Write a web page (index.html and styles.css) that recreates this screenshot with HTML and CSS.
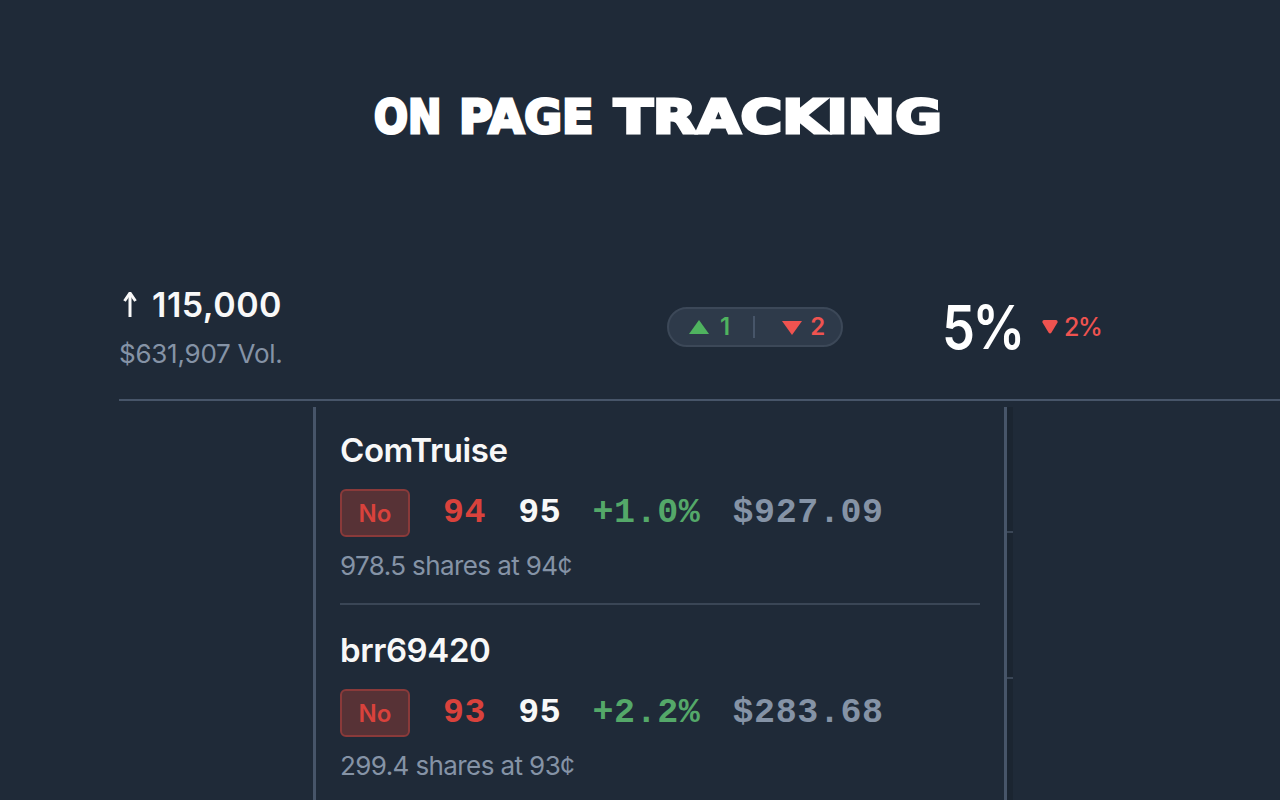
FILE: index.html
```html
<!DOCTYPE html>
<html lang="en">
<head>
  <meta charset="UTF-8" />
  <meta name="viewport" content="width=device-width, initial-scale=1.0" />
  <title>On Page Tracking</title>
  <link rel="stylesheet" href="styles.css">
</head>
<body>
  <header class="title-wrap">
    <h1>
      <span class="word word-on">On</span>
      <span class="word word-page">Page</span>
      <span class="word word-tracking">Tracking</span>
    </h1>
  </header>

  <section class="summary">
    <div class="volume">
      <div class="shares">
        <svg class="shares-arrow" viewBox="0 0 16 25">
          <path d="M8 3 V25" />
          <path d="M2.5 9 L8 1 L13.5 9" />
        </svg>
        115,000
      </div>
      <div class="dollars">$631,907 Vol.</div>
    </div>
    <div class="counts">
      <span class="count up">
        <svg class="tri" viewBox="0 0 20 14"><path d="M10 0 L20 14 L0 14 Z" /></svg>
        1
      </span>
      <span class="count-divider"></span>
      <span class="count down">
        <svg class="tri" viewBox="0 0 20 14"><path d="M0 0 L20 0 L10 14 Z" /></svg>
        2
      </span>
    </div>
    <div class="percent">
      <span class="percent-value">5%</span>
      <span class="percent-change">
        <svg class="tri-small" viewBox="0 0 16 14"><path d="M2 0 H14 Q16 0 15.5 2.5 L9.5 12.5 Q8 14.5 6.5 12.5 L0.5 2.5 Q0 0 2 0 Z" /></svg>
        2%
      </span>
    </div>
  </section>

  <section class="feed">
    <div class="trades">
      <article class="trade">
        <div class="trader">ComTruise</div>
        <div class="trade-row">
          <span class="side">No</span>
          <span class="num entry">94</span>
          <span class="num current">95</span>
          <span class="num gain">+1.0%</span>
          <span class="num value">$927.09</span>
        </div>
        <div class="trade-note">978.5 shares at 94¢</div>
      </article>
      <article class="trade">
        <div class="trader">brr69420</div>
        <div class="trade-row">
          <span class="side">No</span>
          <span class="num entry">93</span>
          <span class="num current">95</span>
          <span class="num gain">+2.2%</span>
          <span class="num value">$283.68</span>
        </div>
        <div class="trade-note">299.4 shares at 93¢</div>
      </article>
    </div>
    <div class="rail">
      <div class="rail-seg first"></div>
      <div class="rail-seg second"></div>
      <div class="rail-seg rest"></div>
    </div>
  </section>
</body>
</html>
```

FILE: styles.css
```css
:root {
  --bg: #1f2a38;
  --line: #475569;
  --muted: #8593a6;
  --white: #f8f8f8;
  --green: #4fb35f;
  --red: #ef5350;
}

* {
  box-sizing: border-box;
  margin: 0;
  padding: 0;
}

html, body {
  height: 800px;
  overflow: hidden;
}

body {
  background: var(--bg);
  color: var(--white);
  font-family: Inter, 'Liberation Sans', sans-serif;
}

.title-wrap {
  display: flex;
  justify-content: center;
  padding: 90px 0 0 36px;
  height: 270px;
}

h1 {
  display: flex;
  gap: 19px;
  font-family: 'DejaVu Sans', sans-serif;
  font-size: 47px;
  line-height: 54px;
  font-weight: 700;
  text-transform: uppercase;
  color: #fff;
  -webkit-text-stroke: 3px #fff;
  white-space: nowrap;
}

/* no display face available, so each word is stretched to the reference width */
.word {
  display: block;
  transform-origin: left center;
}

.word-on { width: 66px; transform: scaleX(0.85); }
.word-page { width: 136px; transform: scaleX(0.98); }
.word-tracking { width: 329px; transform: scaleX(1.21); }

.summary {
  display: flex;
  align-items: center;
  margin-left: 119px;
  height: 131px;
  padding-bottom: 16px;
  border-bottom: 2px solid var(--line);
}

.volume {
  width: 548px;
  padding-top: 1px;
}

.shares {
  display: flex;
  align-items: center;
  gap: 14px;
  font-size: 34px;
  line-height: 38px;
  font-weight: 600;
  letter-spacing: 0.5px;
}

.shares-arrow {
  width: 16px;
  height: 25px;
  margin-left: 3px;
  fill: none;
  stroke: var(--white);
  stroke-width: 3;
}

.dollars {
  margin-top: 15px;
  font-size: 26px;
  line-height: 30px;
  letter-spacing: -0.25px;
  color: var(--muted);
}

.counts {
  display: flex;
  align-items: center;
  width: 176px;
  height: 40px;
  padding-left: 20px;
  background: #2e3a4a;
  border: 2px solid #3c4858;
  border-radius: 20px;
  font-size: 24px;
  font-weight: 600;
}

.count {
  display: flex;
  align-items: center;
  gap: 11px;
}

.count.up { color: var(--green); }
.count.down { color: var(--red); gap: 8px; }

.tri {
  width: 20px;
  height: 14px;
}

.up .tri { fill: var(--green); }
.down .tri { fill: var(--red); margin-top: 3px; }

.count-divider {
  width: 2px;
  height: 22px;
  margin: 0 27px 0 23px;
  background: var(--line);
}

.percent {
  display: flex;
  align-items: center;
  margin-left: 99px;
}

.percent-value {
  width: 77px;
  font-size: 60px;
  line-height: 70px;
  font-weight: 600;
  letter-spacing: -3px;
  color: #fff;
  transform: scaleX(0.875);
  transform-origin: left center;
}

.percent-change {
  display: flex;
  align-items: center;
  gap: 6px;
  margin-left: 23px;
  font-size: 25px;
  font-weight: 500;
  letter-spacing: -1.5px;
  color: var(--red);
}

.tri-small {
  width: 16px;
  height: 14px;
  fill: var(--red);
}

.feed {
  display: flex;
  width: 700px;
  height: 393px;
  margin: 6px 0 0 313px;
}

.trades {
  width: 694px;
  padding: 0 24px;
  border-left: 3px solid var(--line);
  border-right: 3px solid var(--line);
}

.trade {
  height: 198px;
  padding-top: 21px;
  border-bottom: 2px solid #3a4656;
}

.trade + .trade {
  height: 200px;
  padding-top: 23px;
}

.trader {
  font-size: 33px;
  line-height: 44px;
  font-weight: 600;
  letter-spacing: -0.4px;
}

.trade-row {
  display: flex;
  align-items: center;
  margin-top: 17px;
}

.side {
  width: 70px;
  height: 48px;
  line-height: 46px;
  text-align: center;
  font-size: 24px;
  font-weight: 600;
  color: #d9423c;
  background: #573236;
  border: 2px solid #8a3a3a;
  border-radius: 6px;
}

.num {
  margin-left: 32px;
  font-family: 'Liberation Mono', monospace;
  font-size: 35px;
  font-weight: 700;
  letter-spacing: 0.6px;
}

.entry { margin-left: 33px; color: #d9423c; }
.current { color: var(--white); }
.gain { margin-left: 31px; color: #54a869; }
.value { color: var(--muted); }

.trade-note {
  margin-top: 13px;
  font-size: 26px;
  line-height: 32px;
  letter-spacing: -0.6px;
  color: var(--muted);
}

.rail {
  width: 6px;
  background: #1b2531;
}

.rail-seg {
  border-bottom: 2px solid #3a4656;
}

.rail-seg.first { height: 126px; }
.rail-seg.second { height: 146px; }
.rail-seg.rest { border-bottom: 0; }
```
